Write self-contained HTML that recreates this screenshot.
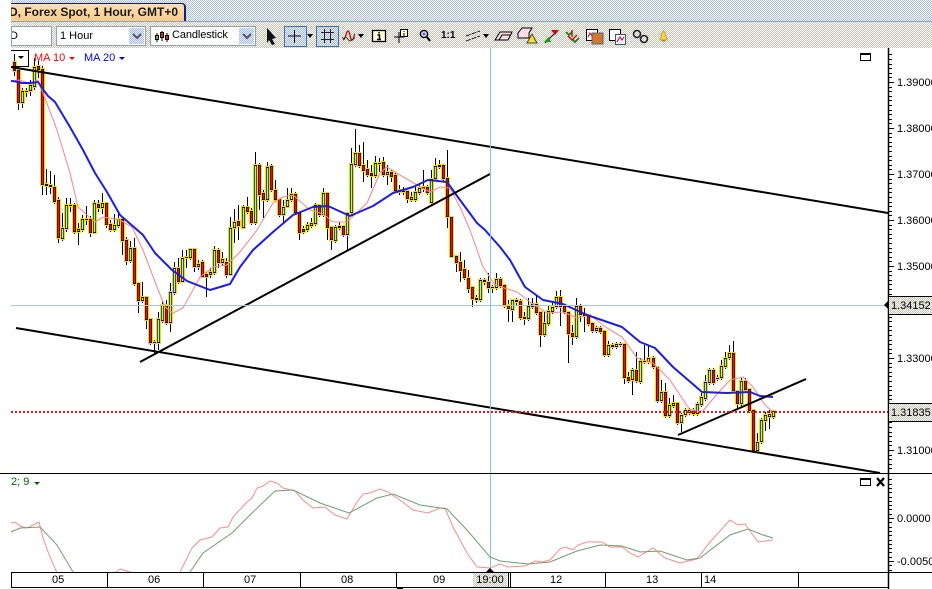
<!DOCTYPE html>
<html><head><meta charset="utf-8"><style>
html,body{margin:0;padding:0;background:#fff}
#p{position:relative;width:932px;height:589px;overflow:hidden;background:#fff;font-family:"Liberation Sans",sans-serif;font-size:11px;color:#000}
#p div{position:absolute;white-space:nowrap}
.bd{background:repeating-conic-gradient(#c8c4b4 0 25%,#fff 0 50%) 0 0/2px 2px}
.ax{font-size:11px;line-height:13px}
.dd{background:repeating-conic-gradient(#a8bce8 0 25%,#e8ecf8 0 50%) 0 0/2px 2px}
.box{background:#fff;border:1px solid #8ca4b4;box-sizing:border-box;height:20px;top:26px}
</style></head><body><div id="p">
<div style="left:11px;top:0;width:921px;height:21px;background:repeating-conic-gradient(#a8bcec 0 25%,#fff 0 50%) 0 0/2px 2px"></div>
<div style="left:11px;top:3px;width:175px;height:18px;background:linear-gradient(#fde0b4,#f9cb8c);border-top:1px solid #102088;border-right:2px solid #102088;border-radius:0 4px 0 0;box-sizing:border-box;overflow:hidden"><div style="left:-2px;top:1px;font-weight:bold;font-size:12px;line-height:15px;color:#1a1a1a">D, Forex Spot, 1 Hour, GMT+0</div></div>
<div style="left:11px;top:21px;width:921px;height:27px" class="bd"></div>
<div style="left:11px;top:21px;width:921px;height:1px;background:#8ca4b4"></div>
<div class="box" style="left:11px;width:41px;overflow:hidden"><div style="left:-2px;top:3px;line-height:13px">D</div></div>
<div class="box" style="left:56px;width:90px"></div>
<div style="left:60px;top:30px;line-height:13px;font-size:11px">1 Hour</div>
<div class="dd" style="left:129px;top:28px;width:15px;height:16px"></div>
<div class="box" style="left:150px;width:106px"></div>
<div style="left:172px;top:29px;line-height:13px;letter-spacing:-.1px">Candlestick</div>
<div class="dd" style="left:239px;top:28px;width:15px;height:16px"></div>
<div class="dd" style="left:284px;top:26px;width:21px;height:19px;border:1px solid #3a70c0"></div>
<div class="dd" style="left:316px;top:26px;width:21px;height:19px;border:1px solid #3a70c0"></div>
<div style="left:441px;top:29px;font-weight:bold;font-size:10px;line-height:13px">1:1</div>

<svg style="position:absolute;left:0;top:0" width="932" height="589" viewBox="0 0 932 589" id="chart">
<g id="icons">
<path d="M133 34l4 4 4-4" fill="none" stroke="#556" stroke-width="2"/>
<path d="M243 34l4 4 4-4" fill="none" stroke="#556" stroke-width="2"/>
<g fill="none" stroke-width="1"><path d="M157 33v9M162 31v10M167 33v9" stroke="#000"/></g>
<rect x="155.500" y="35.500" width="3" height="4" fill="#4c4" stroke="#000"/><rect x="160.500" y="32.500" width="3" height="5" fill="#e22" stroke="#000"/><rect x="165.500" y="35.500" width="3" height="4" fill="#e22" stroke="#000"/>
<path d="M267 28l9 10-4 1 3 5-3 1-3-5-2 3z" fill="#111"/>
<path d="M288 36h13M294.500 30v13" stroke="#000" fill="none"/>
<path d="M307 34h6l-3 4zM358 34h6l-3 4zM483 34h6l-3 4z" fill="#000"/>
<path d="M321 32.500h13M321 39.500h13M324.500 29v14M330.500 29v14" stroke="#222" fill="none"/>
<path d="M343 40c3-1 3-9 5-9s2 9 4 9 2-6 3-6" fill="none" stroke="#c00" stroke-width="1.300"/>
<path d="M342 37c3 4 3-2 5 1s3 4 5 2 2-2 3-2" fill="none" stroke="#111" stroke-width=".8"/>
<rect x="372.500" y="30.500" width="13" height="11" fill="#ffffd8" stroke="#000" stroke-width="1.300"/>
<path d="M379 32v1.500M377.500 35h2v4.500M377 39.500h4" stroke="#000" stroke-width="1.500" fill="none"/>
<path d="M394 37h10M399 32v11" stroke="#000" fill="none"/><rect x="400.500" y="29.500" width="7" height="7" fill="#ffffd8" stroke="#000"/><path d="M404 31v1M404 33v3" stroke="#000"/>
<circle cx="424" cy="34" r="3.600" fill="#dde8ff" stroke="#000" stroke-width="1.400"/><path d="M427 37l3 4" stroke="#000" stroke-width="2"/><path d="M422.500 34h3M424 32.500v3" stroke="#33c"/>
<path d="M466 36l14-5M466 41l14-5" stroke="#222" stroke-dasharray="5 1" fill="none"/>
<path d="M495 40l5-8h12l-4 8z" fill="#fcdce4" stroke="#000"/><path d="M499 40l3-5h9" stroke="#000" fill="none"/>
<path d="M518 33l4-5h10l-3 5v5h-11z" fill="#fcdce4" stroke="#000"/><path d="M527 43l5-9 5 9z" fill="#f8e020" stroke="#444"/>
<path d="M545 43l11-11" stroke="#000"/><path d="M551 30h8l-4 5z" fill="#d00"/><path d="M544 42l5-5 2 5z" fill="#0a0"/>
<path d="M566 32l3 3 3-3M572 39l3 3 4-4" stroke="#181" stroke-width="1.800" fill="none"/><path d="M568 36l4 4 5-5M572 30v7" stroke="#c11" stroke-width="1.500" fill="none"/>
<rect x="586.500" y="29.500" width="11" height="11" fill="#fff" stroke="#000"/><path d="M588 37l2-4 2 3 2-2" stroke="#c00" fill="none"/><rect x="592" y="33" width="11" height="11" fill="#d07830" stroke="#567"/>
<rect x="609.500" y="29.500" width="11" height="11" fill="#fff" stroke="#000"/><rect x="615.500" y="34.500" width="10" height="10" fill="#eef" stroke="#456"/><path d="M617 42l3-5 2 3 2-3" stroke="#c00" fill="none"/>
<circle cx="637" cy="34" r="3.500" fill="none" stroke="#222" stroke-width="1.600"/><circle cx="644" cy="39" r="3.500" fill="none" stroke="#222" stroke-width="1.600"/>
<path d="M660 39c2-1 1-8 3.500-8s1.500 7 3.500 8v1h-7z" fill="#f8d040" stroke="#b89020" stroke-width=".7"/><path d="M662 41h3" stroke="#a70"/>
</g>
<g id="c"></g>
<polyline fill="none" stroke="#ff8a8a" stroke-width="1.100" stroke-linejoin="round" points="11,81 20,80 30,84 38,80 43,93 57,130 70,173 78,207 95,222 103,217 120,220 132,227 143,250 157,287 165,307 173,313 183,308 200,277 213,267 227,265 240,252 257,230 273,203 283,197 293,195 310,210 323,214 333,222 347,222 367,203 380,173 387,167 400,175 417,185 430,192 440,187 450,188 460,207 470,230 483,267 495,285 517,292 530,302 547,313 563,312 577,318 590,315 607,328 622,337 637,358 653,363 670,380 690,410 702,412 718,393 730,380 743,377 753,387 765,405 773,412"/>
<polyline fill="none" stroke="#1c1cf0" stroke-width="2" stroke-linejoin="round" points="11,81 16,81.500 22,83 30,83 38,82 42,88 48,96 55,102 70,127 83,150 95,173 107,192 120,215 143,235 155,253 172,270 187,281 210,290 230,284 240,267 253,250 273,232 293,215 313,207 328,206 350,216 373,206 393,193 413,187 428,180 447,182 460,200 477,223 485,230 500,247 510,260 525,287 543,300 563,304 587,315 622,327 640,342 655,348 673,367 702,392 727,393 750,392 760,396 773,397"/>
<g stroke="#000" stroke-width="2" fill="none">
<path d="M11 67L888 213M16 328L880 473M140 362L490 174M678 435L806 379"/>
</g>
<path d="M11 305.500H886" stroke="#a8c8cc" fill="none"/>
<path d="M490.500 48V572" stroke="#7cc8ec" fill="none"/>
<path d="M11 412H888" stroke="#f01010" stroke-width="2" stroke-dasharray="2 2" fill="none"/>
<path d="M0 473.500H932" stroke="#000" fill="none"/>
<polyline fill="none" stroke="#ff8a8a" points="11,523 15,522 20,526 27,528 33,525 39,522 43,538 50,557 57,573"/>
<polyline fill="none" stroke="#ff8a8a" points="115,573 120,569 127,571 133,573"/>
<polyline fill="none" stroke="#ff8a8a" points="180,572 192,548 200,540 212,537 220,528 228,527 233,517 247,502 252,498 257,488 263,486 270,481 277,483 283,488 295,491 303,500 313,508 325,507 335,515 347,519 357,502 363,494 370,493 380,489 388,492 400,500 413,510 428,513 440,508 445,508 453,527 467,553 477,567 490,568 500,564 508,567 525,566 535,561 542,562 550,560 560,549 565,547 573,550 578,545 587,542 602,542 610,547 622,547 630,553 638,557 653,548 665,558 680,563 697,559 710,542 730,520 738,525 745,524 758,542 773,540"/>
<polyline fill="none" stroke="#6f9f6f" points="11,532 20,528 40,527 57,545 73,572"/>
<polyline fill="none" stroke="#6f9f6f" points="190,572 203,553 232,533 252,513 275,491 293,490 320,503 349,513 377,498 393,494 420,505 447,509 467,530 490,557 500,561 528,564 550,562 577,551 600,545 622,546 640,552 660,551 687,560 700,558 730,535 748,529 763,535 773,538"/>
<rect x="11" y="573" width="877" height="14" fill="#fff"/>
<path d="M11 572.500H932M11 587.500H888M11.500 572V588M107.500 572V588M203.500 572V588M300.500 572V588M396.500 572V588M508.500 572V588M510.500 572V588M605.500 572V588M701.500 572V588M798.500 572V588" stroke="#000" fill="none"/>
<path d="M397 588h6v1h-6z" fill="#000"/>
<path d="M888.500 48V589" stroke="#000" stroke-width="1.500" fill="none"/>
<g id="t" stroke="#000" fill="none"></g>
<rect x="860.500" y="53.500" width="10" height="7" fill="none" stroke="#000"/><path d="M860 54h11" stroke="#000" stroke-width="2"/>
<rect x="860.500" y="478.500" width="10" height="7" fill="#fff" stroke="#000"/><path d="M860 479h11" stroke="#000" stroke-width="2"/>
<path d="M877 478l7 8M884 478l-7 8" stroke="#000" stroke-width="2.200" fill="none"/>
<path d="M11 50.500H28.500V66.500H11" fill="none" stroke="#000"/>
<path d="M18 56h6l-3 3z" fill="#000"/>
<path d="M69 57h6l-3 3z" fill="#f00"/><path d="M119 57h6l-3 3z" fill="#00f"/>
<path d="M34 482h6l-3 3z" fill="#060"/>
<path d="M884 305l4-4v8z" fill="#000"/>
<path d="M486 572l4-4 4 4z" fill="#000"/>
</svg>

<div style="left:34px;top:52px;color:#f00;line-height:13px">MA 10</div>
<div style="left:84px;top:52px;color:#00f;line-height:13px">MA 20</div>
<div style="left:11px;top:476px;color:#060;line-height:13px">2; 9</div>

<div class="ax" style="left:897px;top:77px">1.39000</div>
<div class="ax" style="left:897px;top:123px">1.38000</div>
<div class="ax" style="left:897px;top:169px">1.37000</div>
<div class="ax" style="left:897px;top:215px">1.36000</div>
<div class="ax" style="left:897px;top:261px">1.35000</div>
<div class="ax" style="left:897px;top:353px">1.33000</div>
<div class="ax" style="left:897px;top:445px">1.31000</div>
<div class="ax" style="left:897px;top:513px">0.0000</div>
<div class="ax" style="left:897px;top:556px">-0.0050</div>

<div class="bd" style="left:889px;top:296px;width:43px;height:17px;border-top:1px solid #000;border-bottom:1px solid #000;line-height:18px;text-indent:2px;font-size:11px">1.34152</div>
<div class="bd" style="left:889px;top:403px;width:43px;height:17px;border-top:1px solid #000;border-bottom:1px solid #000;line-height:18px;text-indent:2px;font-size:11px">1.31835</div>

<div class="ax" style="left:52px;top:574px">05</div>
<div class="ax" style="left:148px;top:574px">06</div>
<div class="ax" style="left:244px;top:574px">07</div>
<div class="ax" style="left:341px;top:574px">08</div>
<div class="ax" style="left:433px;top:574px">09</div>
<div class="ax bd" style="left:473px;top:573px;width:34px;height:14px;text-align:center;line-height:14px;font-size:11px">19:00</div>
<div class="ax" style="left:550px;top:574px">12</div>
<div class="ax" style="left:646px;top:574px">13</div>
<div class="ax" style="left:704px;top:574px">14</div>
</div>
<script>
var S=[[14,"62,71,r,54,76;70,103,r,66,110;91,103,g,88,108;91,92,r,88,97;85,91,g,80,96;67,87,g,58,90;66,70,r,61,78;69,185,r,66,195;184,186,r,169,195;185,187,r,171,194;187,202,r,175,204;200,238,r,197,243;228,239,g,213,241;205,229,g,198,232;205,206,r,198,212;205,232,r,203,234;229,232,g,223,245;219,230,g,215,232;219,220,r,206,225;219,233,r,216,237;203,233,g,200,234;204,208,r,200,212;203,208,g,193,214;203,225,r,202,228;224,230,r,220,232;225,230,g,214,232;219,226,g,213,228;219,241,r,217,255;240,261,r,237,265;248,261,g,241,263;248,284,r,238,286;283,301,r,282,313;297,301,g,282,303;297,320,r,296,329;319,343,r,318,345;342,343,r,340,353;319,343,g,312,350;305,321,g,300,323;305,323,r,300,325;292,323,g,283,332;268,293,g,262,295;268,282,r,258,284;258,282,g,250,283;257,258,r,250,268;249,258,g,248,260;249,267,r,248,272;264,267,g,260,270;262,277,r,260,278;274,277,r,272,297;272,275,g,268,278;250,273,g,246,275;250,263,r,248,268;259,263,g,252,266;262,275,r,258,278;228,275,g,217,276;222,228,g,209,243;221,226,r,205,240"],
[243.3,"207,228,g,205,229;207,212,r,197,214;211,223,r,208,225;165,223,g,152,225;165,195,r,163,210;193,200,r,190,218;167,200,g,162,202;166,190,r,164,192;190,200,r,180,202;199,215,r,198,217;207,215,g,200,223;200,207,g,188,208;194,200,g,188,202;194,213,r,192,215;213,233,r,212,240;229,232,r,226,234;225,230,g,222,232;223,226,g,218,228;205,224,g,203,226;205,215,r,204,217;193,215,g,188,217;193,228,r,192,240;227,240,r,226,250;227,241,g,225,243;226,228,g,222,230;226,235,r,225,237;213,235,g,212,250;164,213,g,148,215;153,165,g,129,167;153,166,r,145,168;165,171,r,142,182;169,175,r,160,177;173,176,r,165,188;163,176,g,156,178;163,164,r,158,172;162,175,r,157,177;172,175,g,165,185;172,177,r,170,182;175,191,r,173,193;190,192,g,185,195;191,192,g,187,195;191,199,r,190,203;197,200,g,192,202;192,200,g,187,202;188,193,g,183,195;187,189,r,170,192;187,193,r,185,195;179,203,g,170,205;166,179,g,158,181;165,167,g,160,169;165,179,r,164,181;178,217,r,150,228;217,257,r,216,258"],
[456.3,"256,263,r,255,272;262,271,r,252,282;269,278,r,260,280;278,289,r,270,293;287,299,r,286,307;298,300,g,295,303;280,300,g,278,302;280,282,g,278,285;282,288,r,273,293;287,288,r,285,293;279,288,g,273,290;279,286,r,277,288;285,306,r,284,308;305,309,r,300,322;300,310,g,299,322;300,302,g,298,305;301,318,r,299,320;317,319,g,312,325;306,319,g,298,321;304,307,g,298,309;304,313,r,295,315;312,335,r,311,347;323,335,g,312,337;311,324,g,305,326;307,312,g,302,314;297,307,g,291,309;297,307,r,290,326;306,312,r,305,314;312,334,r,311,363;333,337,r,325,345;306,337,g,298,339;306,315,r,304,322;314,316,g,308,332;315,324,r,314,326;323,331,r,322,333;328,331,g,326,333;328,332,r,326,334;331,355,r,330,357;345,355,g,341,357;345,347,g,343,349;344,347,g,342,349;344,345,r,342,347;344,378,r,343,384;377,381,r,372,383;370,380,g,368,395;370,381,r,352,383;361,382,g,358,384;361,362,g,345,364;358,362,g,345,364"],
[653.3,"358,367,r,356,369;367,401,r,366,403;392,401,g,380,403;392,416,r,383,418;405,416,g,398,418;403,406,g,395,408;403,423,r,402,425;415,423,g,413,432;410,415,g,408,417;410,413,g,408,415;410,414,r,408,416;404,414,g,402,416;397,405,g,393,407;382,399,g,375,401;370,383,g,368,385;370,383,r,368,385;378,379,g,375,381;366,378,g,360,380;358,367,g,352,369;353,358,g,345,360;353,391,r,341,393;391,404,r,390,410;381,404,g,378,406;381,390,r,378,392;389,411,r,388,413;410,451,r,409,453;442,451,g,433,453;420,442,g,418,444;415,421,g,412,431;414,417,g,410,429;411,417,g,410,419"]];
var h="";var w="",y="",k="",cr="",cg="";
S.forEach(function(s){var x=s[0];s[1].split(";").forEach(function(e){var a=e.split(","),t=+a[0],b=+a[1],H=+a[3],L=+a[4],X=Math.round(x);
w+="M"+(X+.5)+" "+H+"V"+L;
var T=t-1,B=b+1;
y+="M"+(X-2)+" "+T+"h5V"+B+"h-5z";
k+="M"+(X-1)+" "+t+"h3V"+b+"h-3z";
if(b-t>2){var p="M"+(X-.3)+" "+(t+1)+"h1.600V"+(b-1)+"h-1.600z";if(a[2]=="r")cr+=p;else cg+=p;}
x+=4;});});
h='<path d="'+w+'" stroke="#000" fill="none"/><path d="'+y+'" fill="#ffd800"/><path d="'+k+'" fill="#111"/><path d="'+cr+'" fill="#f01000"/><path d="'+cg+'" fill="#a8f4a8"/>';
document.getElementById("c").innerHTML=h;
var t="";for(var i=-2;i<10;i++){var Y0=82+46*i;for(var j=0;j<10;j++){var Y=Y0+4.6*j;if(Y<50||Y>472)continue;Y=Math.round(Y)+.5;t+="M889 "+Y+"h"+(j==0?5:3);}}
for(var q=-12;q<=12;q++){var Y=518+4.3*q;if(Y<476||Y>570)continue;Y=Math.round(Y)+.5;t+="M889 "+Y+"h"+(q%10==0?5:3);}
document.getElementById("t").innerHTML='<path d="'+t+'"/>';
</script>
</body></html>
